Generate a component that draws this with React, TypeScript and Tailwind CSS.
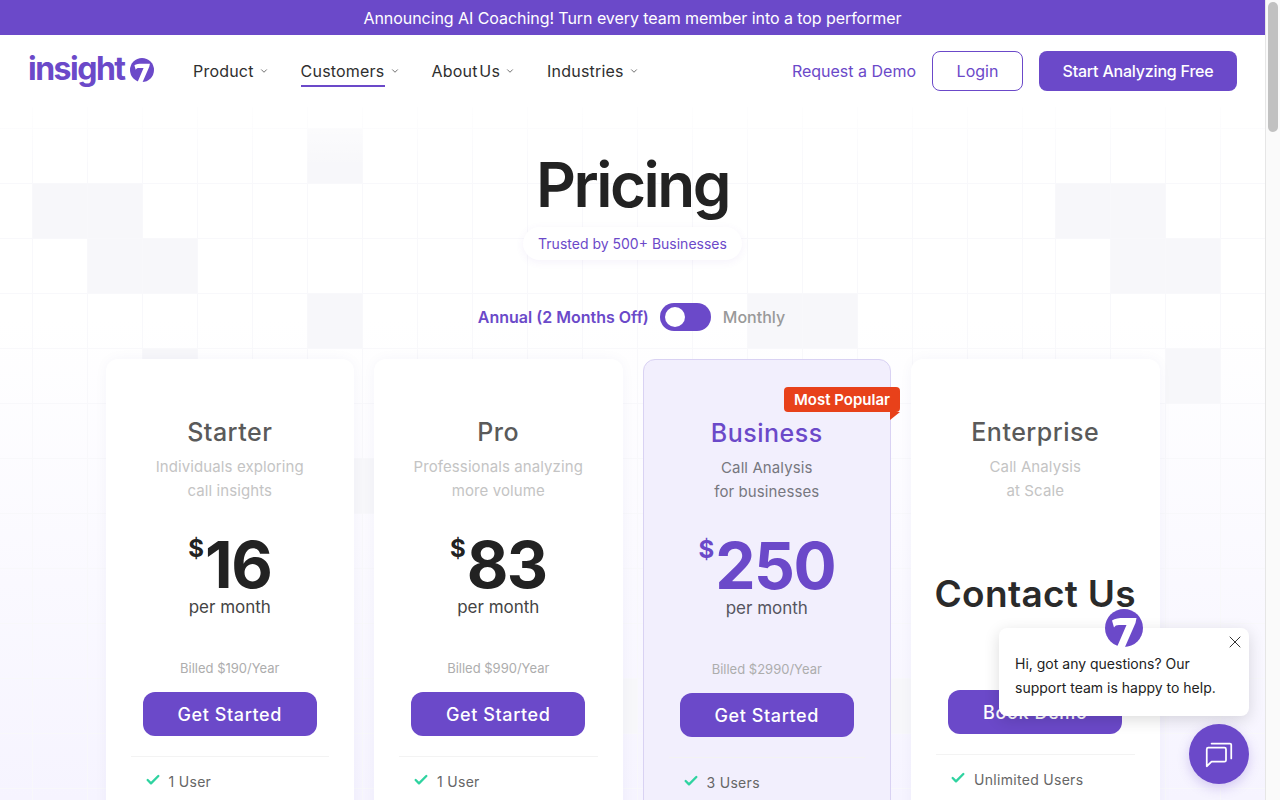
import { Check, ChevronDown, X } from 'lucide-react';

const tiles = ['1-6', '2-1', '2-2', '3-2', '3-3', '4-6', '2-20', '2-21', '3-21', '3-22', '4-14', '4-15', '5-22', '5-3', '7-6', '7-7', '11-11', '11-16'];

const plans = [
  { name: 'Starter', desc: ['Individuals exploring', 'call insights'], price: '16', billed: 'Billed $190/Year', feature: '1 User' },
  { name: 'Pro', desc: ['Professionals analyzing', 'more volume'], price: '83', billed: 'Billed $990/Year', feature: '1 User' },
  { name: 'Business', desc: ['Call Analysis', 'for businesses'], price: '250', billed: 'Billed $2990/Year', feature: '3 Users', popular: true },
  { name: 'Enterprise', desc: ['Call Analysis', 'at Scale'], billed: '', feature: 'Unlimited Users' },
];

const SevenMark = ({ className }: { className: string }) => (
  <svg viewBox="0 0 38 38" className={className}>
    <circle cx="19" cy="19" r="19" fill="#6b49c9" />
    <path d="M7 11.5C10 9.5 14 9 19 9h12.5l-1 5L20 38h-8l9.5-22H14c-2.5 0-4 .8-5 2.5z" fill="#fff" />
  </svg>
);

const GridBackdrop = () => (
  <div className="absolute left-[-22px] top-[74px] grid grid-cols-[repeat(19,55px)_33px_repeat(5,55px)] auto-rows-[55px]">
    {Array.from({ length: 14 * 25 }).map((_, i) => {
      const key = `${Math.floor(i / 25)}-${i % 25}`;
      return (
        <div
          key={i}
          className={`border-r border-b border-[#f8f8fb] ${tiles.includes(key) ? 'bg-[#f7f7fa]' : ''}`}
        />
      );
    })}
  </div>
);

const PlanCard = ({ plan }: { plan: (typeof plans)[number] }) => {
  const enterprise = plan.name === 'Enterprise';
  return (
    <div
      className={`relative w-[248.5px] h-[480px] shrink-0 rounded-xl text-center pt-[57px] ${
        plan.popular ? 'bg-[#f2effd] border border-[#d9d2f3]' : 'bg-white shadow-[0_0_14px_rgba(60,50,120,0.04)]'
      }`}
    >
      {plan.popular && (
        <div className="absolute right-[-10px] top-[27px] w-[116px] h-[25px] rounded-sm bg-[#e8411a] text-white text-[15px] font-semibold leading-[25px]">
          Most Popular
          <div className="absolute right-0 top-[25px] w-0 h-0 border-t-[8px] border-t-[#e8411a] border-r-[10px] border-r-transparent" />
        </div>
      )}
      <div className={`text-[25px] leading-8 font-medium tracking-[0.5px] ${plan.popular ? 'text-[#6b49c9]' : 'text-[#5a5a5a]'}`}>
        {plan.name}
      </div>
      <div className={`mt-[7px] text-[15px] leading-6 tracking-[0.1px] ${plan.popular ? 'text-[#77777f]' : 'text-[#c4c4c4]'}`}>
        {plan.desc.map((d) => (
          <div key={d}>{d}</div>
        ))}
      </div>
      {enterprise ? (
        <div className="mt-[69px] text-[37px] leading-[44px] font-semibold tracking-[0.3px] text-[#2a2a2a]">Contact Us</div>
      ) : (
        <>
          <div className={`mt-[30px] h-16 flex justify-center items-start ${plan.popular ? 'text-[#6b49c9]' : 'text-[#222]'}`}>
            <span className="text-[24px] font-bold leading-8 mr-px">$</span>
            <span className="text-[64px] leading-[64px] font-bold tracking-[-1.5px]">{plan.price}</span>
          </div>
          <div className={`text-[17px] leading-5 ${plan.popular ? 'text-[#55555f]' : 'text-[#444]'}`}>per month</div>
          <div className="mt-[41px] text-[13px] leading-5 text-[#adadad]">{plan.billed}</div>
        </>
      )}
      <button
        className={`mx-auto block w-[174px] h-11 rounded-xl bg-[#6b49c9] text-white text-[18px] font-medium tracking-[0.6px] ${
          enterprise ? 'mt-[74px]' : 'mt-[14px]'
        }`}
      >
        {enterprise ? 'Book Demo' : 'Get Started'}
      </button>
      <div className="mx-[25px] mt-5 border-t border-[#f3f3f3]" />
      <div className="mt-[13px] ml-[39px] flex items-center gap-2 text-[14px] leading-6 text-[#666] tracking-[0.3px]">
        <Check size={16} strokeWidth={3.5} className="text-[#2fd3a0] -mt-1" />
        {plan.feature}
      </div>
    </div>
  );
};

export default function App() {
  return (
    <div className="h-screen overflow-hidden flex font-['Inter',sans-serif]">
      <div className="relative flex-1 min-w-0 overflow-hidden bg-gradient-to-b from-white from-40% to-[#f6f4ff]">
        <GridBackdrop />
        <div className="absolute left-0 right-0 top-[107px] h-[60px] bg-gradient-to-b from-white/80 to-transparent" />

        <div className="relative">
          <div className="h-[35px] bg-[#6b49c9] text-white text-[16px] tracking-[-0.06px] flex items-center justify-center">
            Announcing AI Coaching! Turn every team member into a top performer
          </div>

          <nav className="h-[72px] pl-7 pr-7 flex items-center bg-white">
            <div className="flex items-center gap-[5px] w-[126px] text-[#6b49c9]">
              <span className="text-[32px] leading-none font-bold tracking-[-1.5px] -mt-1">insight</span>
              <SevenMark className="w-6 h-6 mb-[2px]" />
            </div>
            <div className="ml-[39px] flex items-center gap-[32px] text-[16px] tracking-[0.2px] [word-spacing:-3px] text-[#2f2f2f]">
              {['Product', 'Customers', 'About Us', 'Industries'].map((item) => (
                <div key={item} className="flex items-center gap-[5px]">
                  <span className={item === 'Customers' ? 'border-b-2 border-[#6b49c9] pb-[2px] pt-[4px]' : 'pb-[4px] pt-[4px]'}>{item}</span>
                  <ChevronDown size={10} strokeWidth={2} className="text-[#555]" />
                </div>
              ))}
            </div>
            <div className="ml-auto flex items-center text-[16px]">
              <span className="text-[#6b49c9]">Request a Demo</span>
              <button className="ml-4 w-[91px] h-10 rounded-lg border border-[#6b49c9] bg-white text-[#6b49c9]">Login</button>
              <button className="ml-4 w-[198px] h-10 rounded-lg bg-[#6b49c9] text-white font-medium tracking-[-0.2px]">Start Analyzing Free</button>
            </div>
          </nav>

          <div className="flex flex-col items-center">
            <h1 className="mt-[38px] text-[62px] leading-[80px] font-semibold text-[#222] tracking-[-2.5px]">Pricing</h1>
            <div className="mt-[2px] w-[219px] h-[33px] rounded-full bg-white shadow-[0_2px_8px_rgba(107,73,201,0.07)] text-[14px] text-[#6b49c9] flex items-center justify-center">
              Trusted by 500+ Businesses
            </div>

            <div className="mt-[43px] mr-[2px] flex items-center text-[16px]">
              <span className="font-semibold text-[#6b49c9]">Annual (2 Months Off)</span>
              <div className="ml-[11px] w-[51px] h-7 rounded-full bg-[#6b49c9] flex items-center pl-[5px]">
                <div className="w-5 h-5 rounded-full bg-white" />
              </div>
              <span className="ml-3 font-medium text-[#999]">Monthly</span>
            </div>

            <div className="mt-[28px] flex gap-5">
              {plans.map((plan) => (
                <PlanCard key={plan.name} plan={plan} />
              ))}
            </div>
          </div>
        </div>

        <div className="absolute left-[999px] top-[628px] w-[250px] h-[88px] rounded-lg bg-white shadow-[0_4px_16px_rgba(0,0,0,0.14)] pl-4 pt-6 text-[14px] leading-6 text-[#222]">
          <div className="absolute left-[106px] top-[-19px] w-[38px] h-[38px] overflow-hidden">
            <SevenMark className="w-[38px] h-[38px]" />
          </div>
          <X size={20} strokeWidth={1.2} className="absolute right-1 top-1 text-[#333]" />
          <div>Hi, got any questions? Our</div>
          <div>support team is happy to help.</div>
        </div>

        <div className="absolute left-[1189px] top-[724px] w-[60px] h-[60px] rounded-full bg-[#6b49c9] shadow-[0_4px_12px_rgba(107,73,201,0.25)] flex items-center justify-center">
          <svg viewBox="0 0 32 32" className="w-7 h-7" fill="none" stroke="#fff" strokeWidth="2">
            <path d="M2 10.5c0-1 .8-1.8 1.8-1.8h18.4c1 0 1.8.8 1.8 1.8V23c0 1-.8 1.8-1.8 1.8H7.5L2 30z" strokeLinejoin="round" />
            <path d="M7.5 4h21c.8 0 1.5.7 1.5 1.5V21" strokeLinecap="round" />
          </svg>
        </div>
      </div>

      <div className="w-[15px] shrink-0 bg-[#fafafa] border-l border-[#e6e6e6] pl-[2px] pt-[2px]">
        <div className="w-[10px] h-[130px] rounded-full bg-[#c1c1c1]" />
      </div>
    </div>
  );
}
